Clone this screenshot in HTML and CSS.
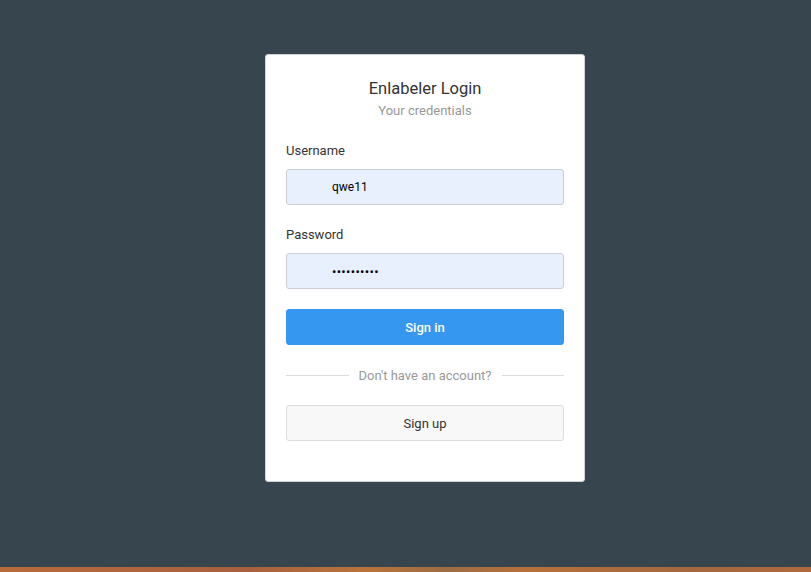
FILE: index.html
```html
<!DOCTYPE html>
<html>
<head>
<meta charset="utf-8">
<link rel="stylesheet" href="styles.css">
</head>
<body>
<div class="page">
  <main class="stage">
    <form class="card">
      <h1 class="title">Enlabeler Login</h1>
      <p class="subtitle">Your credentials</p>
      <label class="label">Username</label>
      <div class="input">qwe11</div>
      <label class="label">Password</label>
      <div class="input dots">••••••••••</div>
      <button type="button" class="btn primary">Sign in</button>
      <div class="divider"><span class="line"></span><span class="divtext">Don't have an account?</span><span class="line"></span></div>
      <button type="button" class="btn secondary">Sign up</button>
    </form>
  </main>
  <div class="strip"></div>
</div>
</body>
</html>
```
FILE: styles.css
```css
* { box-sizing: border-box; }
html, body { margin: 0; padding: 0; height: 100%; }
body {
  background: #37454e;
  font-family: Roboto, "Noto Sans", Arial, sans-serif;
  color: #333;
}
.page {
  height: 572px;
  display: flex;
  flex-direction: column;
}
.stage {
  flex: 1;
  display: flex;
  justify-content: center;
  align-items: flex-start;
  padding-top: 54px;
  padding-left: 39px;
}
.card {
  width: 320px;
  background: #fff;
  border: 1px solid #d0d4d8;
  border-radius: 3px;
  padding: 22px 20px 40px 20px;
  display: flex;
  flex-direction: column;
}
.title {
  margin: 0;
  font-size: 16.5px;
  font-weight: 400;
  line-height: 24px;
  text-align: center;
  color: #333;
}
.subtitle {
  margin: 0;
  font-size: 13px;
  line-height: 20px;
  text-align: center;
  color: #999;
}
.label {
  margin-top: 20px;
  font-size: 13px;
  line-height: 20px;
  color: #333;
}
.input {
  margin-top: 8px;
  height: 36px;
  border: 1px solid #ccd0d6;
  border-radius: 3px;
  background: #e8f0fe;
  padding-left: 45px;
  display: flex;
  align-items: center;
  font-size: 12px;
  color: #000;
}
.input.dots {
  font-size: 13px;
  letter-spacing: 0.3px;
}
.btn {
  margin-top: 20px;
  height: 36px;
  border-radius: 3px;
  font-family: inherit;
  font-size: 13px;
  cursor: pointer;
}
.primary {
  background: #3597ef;
  border: 1px solid #3597ef;
  color: #fff;
  font-weight: 500;
}
.secondary {
  background: #f8f8f8;
  border: 1px solid #dcdcdc;
  color: #333;
}
.divider {
  margin-top: 20px;
  height: 20px;
  display: flex;
  align-items: center;
  gap: 10px;
}
.line {
  flex: 1;
  height: 1px;
  background: #dcdcdc;
}
.divtext {
  font-size: 13px;
  color: #999;
}
.strip {
  height: 5px;
  background: linear-gradient(90deg, #b86b3a 0%, #a9603f 30%, #b9733a 45%, #9e6d44 55%, #b7703a 65%, #a4683f 85%, #b0693c 100%);
}
```
